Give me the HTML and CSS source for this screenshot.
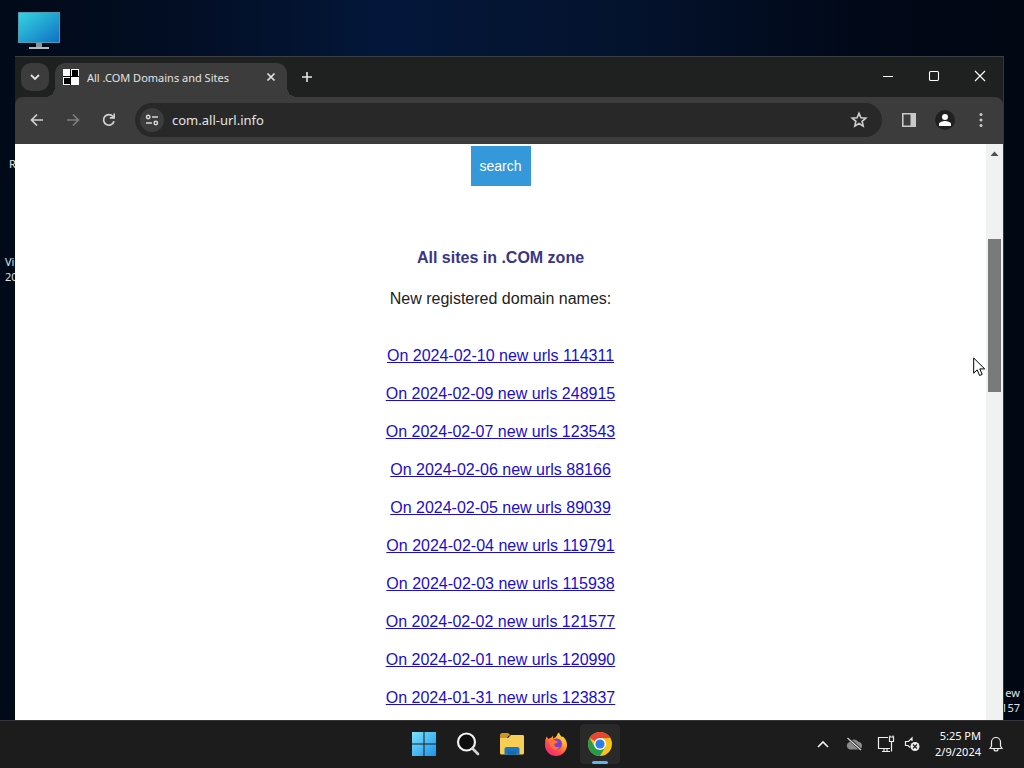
FILE: index.html
```html
<!DOCTYPE html>
<html lang="en">
<head>
    <meta charset="UTF-8">
    <meta name="viewport" content="width=device-width, initial-scale=1.0">
    <title>All .COM Domains and Sites</title>
    <link rel="stylesheet" href="styles.css">
</head>
<body>
    <main class="desktop">
        <!-- Desktop icons -->
        <svg class="desktop-icon" width="42" height="38" viewBox="0 0 42 38" aria-hidden="true">
            <defs>
                <linearGradient id="screen" x1="0" y1="0" x2="1" y2="1">
                    <stop offset="0" stop-color="#35d6e0"/>
                    <stop offset="1" stop-color="#0f6fc4"/>
                </linearGradient>
            </defs>
            <rect x="0.5" y="0.5" width="41" height="30" fill="url(#screen)" stroke="#4a9db5"/>
            <path d="M18 31h6v4h-6z" fill="#8b9499"/>
            <path d="M11 35h20v2H11z" fill="#b5bcc0"/>
        </svg>
        <span class="desktop-label label-r">R</span>
        <span class="desktop-label label-vi">Vi<br>20</span>
        <span class="desktop-label label-ew">ew<br>157</span>

        <!-- Browser window -->
        <section class="window">
            <header class="tab-strip">
                <button class="tab-search" aria-label="Search tabs">
                    <svg width="10" height="10" viewBox="0 0 10 10"><path d="M1 3l4 4 4-4" fill="none" stroke="#e3e3e3" stroke-width="1.8"/></svg>
                </button>
                <div class="tab">
                    <svg width="16" height="16" viewBox="0 0 16 16" aria-hidden="true">
                        <path d="M0 0h16v16H0z" fill="#fff"/>
                        <path d="M9 1h6v6H9zM1 9h6v6H1zM7 0h1v16H7zM0 7h16v1H0z" fill="#000"/>
                    </svg>
                    <span class="tab-title">All .COM Domains and Sites</span>
                    <button class="tab-close" aria-label="Close tab">
                        <svg width="10" height="10" viewBox="0 0 10 10"><path d="M1.5 1.5l7 7M8.5 1.5l-7 7" stroke="#e3e3e3" stroke-width="1.7"/></svg>
                    </button>
                </div>
                <button class="new-tab" aria-label="New tab">
                    <svg width="12" height="12" viewBox="0 0 12 12"><path d="M6 1v10M1 6h10" stroke="#e3e3e3" stroke-width="1.6"/></svg>
                </button>
                <div class="window-controls">
                    <button aria-label="Minimize"><svg width="12" height="12" viewBox="0 0 12 12"><path d="M1 6.5h10" stroke="#fff"/></svg></button>
                    <button aria-label="Maximize"><svg width="12" height="12" viewBox="0 0 12 12"><rect x="1.5" y="1.5" width="9" height="9" rx="1.2" fill="none" stroke="#fff" stroke-width="1.1"/></svg></button>
                    <button aria-label="Close"><svg width="12" height="12" viewBox="0 0 12 12"><path d="M1 1l10 10M11 1L1 11" stroke="#fff" stroke-width="1.1"/></svg></button>
                </div>
            </header>

            <nav class="toolbar">
                <button class="tool" aria-label="Back"><svg width="16" height="16" viewBox="0 0 16 16"><path d="M14 8H3M8 2.5L2.5 8 8 13.5" fill="none" stroke="#d0d0d0" stroke-width="1.7"/></svg></button>
                <button class="tool" aria-label="Forward"><svg width="16" height="16" viewBox="0 0 16 16"><path d="M2 8h11M8 2.5L13.5 8 8 13.5" fill="none" stroke="#7c7c7c" stroke-width="1.7"/></svg></button>
                <button class="tool" aria-label="Reload"><svg width="16" height="16" viewBox="0 0 16 16"><path d="M13 9.3A5.3 5.3 0 1 1 12 4.5L13.2 6" fill="none" stroke="#d0d0d0" stroke-width="1.8"/><path d="M14 1.5v5.2H8.8V5.1h3.6V1.5z" fill="#d0d0d0"/></svg></button>
                <div class="omnibox">
                    <button class="site-info" aria-label="View site information">
                        <svg width="14" height="14" viewBox="0 0 14 14" fill="none" stroke="#d8d8d8" stroke-width="1.5"><circle cx="3.2" cy="4" r="1.7"/><path d="M7 4h6M1 10h6"/><circle cx="10.8" cy="10" r="1.7"/></svg>
                    </button>
                    <input class="address" type="text" aria-label="Address" value="com.all-url.info">
                    <button class="bookmark" aria-label="Bookmark this tab">
                        <svg width="18" height="18" viewBox="0 0 18 18"><path d="M9 2.2l1.9 4.5 4.9.4-3.7 3.2 1.1 4.8L9 12.5l-4.2 2.6 1.1-4.8-3.7-3.2 4.9-.4z" fill="none" stroke="#cfcfcf" stroke-width="1.6"/></svg>
                    </button>
                </div>
                <div class="tools">
                    <button class="tool" aria-label="Side panel"><svg width="16" height="16" viewBox="0 0 16 16"><path d="M1.8 1.8h12.4v12.4H1.8z" fill="none" stroke="#c9c9c9" stroke-width="1.6"/><path d="M9.5 1h5.5v14H9.5z" fill="#c9c9c9"/></svg></button>
                    <button class="tool" aria-label="Profile"><svg width="20" height="20" viewBox="0 0 20 20"><circle cx="10" cy="10" r="10" fill="#202020"/><circle cx="10" cy="7" r="3" fill="#fff"/><path d="M4 16v-2c0-2 4-3 6-3s6 1 6 3v2z" fill="#fff"/></svg></button>
                    <button class="tool" aria-label="Menu"><svg width="16" height="16" viewBox="0 0 16 16" fill="#c9c9c9"><circle cx="8" cy="2.5" r="1.5"/><circle cx="8" cy="8" r="1.5"/><circle cx="8" cy="13.5" r="1.5"/></svg></button>
                </div>
            </nav>

            <div class="viewport">
                <article class="page">
                    <button class="search-button">search</button>
                    <h1>All sites in .COM zone</h1>
                    <p>New registered domain names:</p>
                    <ul class="dates">
                        <li><a href="#">On 2024-02-10 new urls 114311</a></li>
                        <li><a href="#">On 2024-02-09 new urls 248915</a></li>
                        <li><a href="#">On 2024-02-07 new urls 123543</a></li>
                        <li><a href="#">On 2024-02-06 new urls 88166</a></li>
                        <li><a href="#">On 2024-02-05 new urls 89039</a></li>
                        <li><a href="#">On 2024-02-04 new urls 119791</a></li>
                        <li><a href="#">On 2024-02-03 new urls 115938</a></li>
                        <li><a href="#">On 2024-02-02 new urls 121577</a></li>
                        <li><a href="#">On 2024-02-01 new urls 120990</a></li>
                        <li><a href="#">On 2024-01-31 new urls 123837</a></li>
                    </ul>
                </article>
                <div class="scrollbar">
                    <svg width="9" height="5" viewBox="0 0 9 5" aria-hidden="true"><path d="M0.5 5l4-4.5 4 4.5z" fill="#505050"/></svg>
                    <div class="thumb"></div>
                </div>
            </div>
        </section>

        <svg class="cursor" width="13" height="20" viewBox="0 0 13 20" aria-hidden="true"><path d="M.7 1v15.2l3.5-3.3 2.4 5.6 2.6-1.1-2.4-5.5h4.9z" fill="#fff" stroke="#000"/></svg>
    </main>

    <!-- Taskbar -->
    <footer class="taskbar">
        <div class="apps">
            <button class="app" aria-label="Start">
                <svg width="24" height="24" viewBox="0 0 24 24">
                    <defs><linearGradient id="win" x1="0" y1="0" x2="1" y2="1"><stop offset="0" stop-color="#7be3fb"/><stop offset="1" stop-color="#1b93ea"/></linearGradient></defs>
                    <path d="M0 0h11.5v11.5H0zM12.5 0H24v11.5H12.5zM0 12.5h11.5V24H0zM12.5 12.5H24V24H12.5z" fill="url(#win)"/>
                </svg>
            </button>
            <button class="app" aria-label="Search">
                <svg width="24" height="24" viewBox="0 0 24 24"><circle cx="10.5" cy="10" r="8.5" fill="#0d0d0d" stroke="#f2f2f2" stroke-width="2.2"/><path d="M16.5 16.5l5.5 5.5" stroke="#d5d5d5" stroke-width="2.6" stroke-linecap="round"/></svg>
            </button>
            <button class="app" aria-label="File Explorer">
                <svg width="26" height="24" viewBox="0 0 26 24">
                    <path d="M1 3.500Q1 1 3 1h6l3 2.500H1z" fill="#d29a1c"/>
                    <path d="M1 6h8l3-3h12q1 0 1 1.500V21q0 1.500-1.500 1.500h-21Q1 22.500 1 21z" fill="#f7cd55"/>
                    <path d="M1 3h9L8 6H1z" fill="#c9952a"/>
                    <path d="M5.500 22.500V17q0-2 2-2h11q2 0 2 2v5.500z" fill="#1976c5"/>
                    <path d="M9 22.500V20q0-1 1-1h6q1 0 1 1v2.500z" fill="#1469b2"/>
                </svg>
            </button>
            <button class="app" aria-label="Firefox">
                <svg width="24" height="24" viewBox="0 0 24 24">
                    <defs><linearGradient id="fox" x1="0.9" y1="0" x2="0.2" y2="1"><stop offset="0" stop-color="#fff04a"/><stop offset="0.4" stop-color="#ff9a2b"/><stop offset="0.7" stop-color="#ff4450"/><stop offset="1" stop-color="#e72a82"/></linearGradient></defs>
                    <path d="M2.500 4.500l2 2.500Q6 5.500 7.500 5.500L9 3.500v3q3-1 4-3 0-2 2-3 .5 2.500 3 4.500l1-.5q4 4 4 8.500A11 11 0 0 1 1 13Q.500 8 2.500 4.500z" fill="url(#fox)"/>
                    <circle cx="12.500" cy="12" r="5.500" fill="#7941c8"/>
                    <path d="M5 8q4-2 7 1l2 .5q-.5 2-3 2-1.500 1 0 3 2 1.500 4.500 0-1.500 4-5.500 3-5-2-5-9.500z" fill="#ff7139"/>
                    <path d="M12 5q4-1 7 4 1 5-1 8 5-8-1-12l-2-3z" fill="#ffc43d"/>
                </svg>
            </button>
            <button class="app active" aria-label="Google Chrome">
                <svg width="24" height="24" viewBox="0 0 24 24">
                    <circle cx="12" cy="12" r="12" fill="#fbc116"/>
                    <path d="M12 12L1.610 6A12 12 0 0 1 22.390 6H12z" fill="#ea4335"/>
                    <path d="M1.610 6L6.800 15 12 18l5.200-3L12 24A12 12 0 0 1 1.610 6z" fill="#269b4b"/>
                    <circle cx="12" cy="12" r="6" fill="#fff"/>
                    <circle cx="12" cy="12" r="4.600" fill="#2b7de9"/>
                </svg>
            </button>
        </div>
        <div class="tray">
            <svg width="12" height="8" viewBox="0 0 12 8" aria-hidden="true"><path d="M1 7l5-5 5 5" fill="none" stroke="#f0f0f0" stroke-width="1.6"/></svg>
            <svg class="cloud" width="18" height="16" viewBox="0 0 18 16" aria-hidden="true"><path d="M4.500 13.500a4 4 0 0 1-.2-7.500A5.500 5.500 0 0 1 13.500 6a3.800 3.800 0 0 1 .5 7.500z" fill="#8a8a8a"/><path d="M3 2l13 12" stroke="#1c1c1c" stroke-width="2.400"/><path d="M2.500 2l13.500 12" stroke="#ddd" stroke-width="1.200"/></svg>
            <svg width="18" height="18" viewBox="0 0 18 18" fill="none" stroke="#eee" stroke-width="1.2" aria-hidden="true"><path d="M11 2.500H1.500v11H13M5 16.500h8M7 13.500v3M10 13.500v3M12.500 2h4v4.500h-4zM14.500 6.500v10M13 2V.5M16 2V.5"/></svg>
            <svg width="16" height="16" viewBox="0 0 16 16" aria-hidden="true"><path d="M8 5V2L4.500 5.500h-3v4h2.500l2 2" fill="none" stroke="#eee" stroke-width="1.2"/><circle cx="11" cy="10.500" r="4.500" fill="#eee"/><path d="M9 8.500l4 4M13 8.500l-4 4" stroke="#1c1c1c" stroke-width="1.2"/></svg>
            <time class="clock" datetime="2024-02-09T17:25">5:25 PM<br>2/9/2024</time>
            <svg width="14" height="16" viewBox="0 0 14 16" fill="none" stroke="#eee" stroke-width="1.2" aria-hidden="true"><path d="M1 12.500h12l-1.500-2.500V6a4.500 4.500 0 0 0-9 0v4zM5 13q0 2 2 2t2-2"/></svg>
        </div>
    </footer>
</body>
</html>
```

FILE: styles.css
```css
/* Reset and Base Styling */
* {
    margin: 0;
    padding: 0;
    box-sizing: border-box;
}

body {
    display: flex;
    flex-direction: column;
    height: 100vh;
    overflow: hidden;
    font-family: 'Noto Sans', 'Open Sans', sans-serif;
    font-size: 11px;
    color: #fff;
}

button {
    display: flex;
    align-items: center;
    justify-content: center;
    flex-shrink: 0;
    background: none;
    border: none;
}

svg {
    display: block;
    flex-shrink: 0;
}

/* Desktop */
.desktop {
    position: relative;
    flex: 1;
    min-height: 0;
    background: linear-gradient(90deg, #010a18, #020e24 18%, #04173a 38%, #04132e 60%, #010817 85%, #010713);
}

.desktop-icon {
    position: absolute;
    left: 18px;
    top: 12px;
}

.desktop-label {
    position: absolute;
    line-height: 15px;
    color: #dfe3e8;
}

.label-r {
    left: 9px;
    top: 156px;
}

.label-vi {
    left: 5px;
    top: 254px;
}

.label-ew {
    right: 4px;
    bottom: 5px;
    text-align: right;
}

/* Browser window */
.window {
    position: absolute;
    top: 56px;
    left: 15px;
    right: 20px;
    bottom: 0;
    display: flex;
    flex-direction: column;
    background: #1f2120;
    border-top: 1px solid #3b3f42;
    border-right: 1px solid #33363a;
}

.tab-strip {
    display: flex;
    height: 40px;
    padding: 6px 0 0 6px;
}

.tab-search {
    width: 28px;
    height: 28px;
    border-radius: 10px;
    background: #3c3c3c;
}

.tab {
    position: relative;
    display: flex;
    align-items: center;
    gap: 8px;
    width: 232px;
    margin-left: 6px;
    padding: 0 10px 6px 8px;
    border-radius: 10px 10px 0 0;
    background: #3c3c3c;
}

/* curved feet of the active tab */
.tab::before,
.tab::after {
    content: "";
    position: absolute;
    bottom: 0;
    width: 10px;
    height: 10px;
}

.tab::before {
    right: 100%;
    background: radial-gradient(circle at 0 0, transparent 10px, #3c3c3c 10px);
}

.tab::after {
    left: 100%;
    background: radial-gradient(circle at 100% 0, transparent 10px, #3c3c3c 10px);
}

.tab-title {
    flex: 1;
    white-space: nowrap;
    color: #e3e3e3;
}

.tab-close {
    width: 12px;
    height: 16px;
}

.new-tab {
    width: 28px;
    height: 28px;
    margin-left: 6px;
}

.window-controls {
    display: flex;
    margin-left: auto;
}

.window-controls button {
    width: 46px;
    height: 26px;
}

.toolbar {
    display: flex;
    align-items: center;
    height: 47px;
    padding: 0 4px 2px;
    background: #3c3c3c;
    border-radius: 8px 8px 0 0;
}

.tool {
    width: 36px;
    height: 34px;
}

.omnibox {
    display: flex;
    align-items: center;
    flex: 1;
    height: 34px;
    margin-left: 8px;
    padding: 0 14px 0 5px;
    border-radius: 17px;
    background: #282828;
}

.site-info {
    width: 24px;
    height: 24px;
    border-radius: 12px;
    background: #3c3c3c;
}

.address {
    flex: 1;
    margin-left: 8px;
    border: none;
    outline: none;
    background: none;
    font-family: inherit;
    font-size: 13px;
    color: #e3e3e3;
}

.tools {
    display: flex;
    margin-left: 9px;
}

/* Web page */
.viewport {
    display: flex;
    flex: 1;
    min-height: 0;
    background: #fff;
}

.page {
    display: flex;
    flex-direction: column;
    align-items: center;
    flex: 1;
    overflow: hidden;
    padding-top: 2px;
    font-family: 'Liberation Sans', Arial, sans-serif;
    font-size: 16px;
    line-height: 18px;
    color: #222;
}

.search-button {
    width: 60px;
    height: 40px;
    background: #3498db;
    color: #fff;
    font-family: inherit;
    font-size: 14px;
}

.page h1 {
    margin-top: 63px;
    font-size: 16px;
    color: #3a3585;
}

.page p {
    margin-top: 23px;
}

.dates {
    margin-top: 29px;
    list-style: none;
    text-align: center;
    line-height: 38px;
}

.dates a {
    color: #1a0dcb;
}

.scrollbar {
    width: 17px;
    padding: 7px 2px 0;
    background: #f0f1f1;
}

.scrollbar svg {
    margin: 0 auto;
}

.thumb {
    height: 153px;
    margin-top: 83px;
    background: #797b7a;
}

.cursor {
    position: absolute;
    right: 38px;
    top: 357px;
}

/* Taskbar */
.taskbar {
    display: grid;
    grid-template-columns: 1fr auto 1fr;
    align-items: center;
    height: 48px;
    padding-bottom: 1px;
    background: #1c1c1c;
    border-top: 1px solid #37373a;
}

.apps {
    grid-column: 2;
    display: flex;
    gap: 4px;
}

.app {
    position: relative;
    width: 40px;
    height: 40px;
    border-radius: 4px;
}

.app.active {
    background: #292929;
}

.app.active::after {
    content: "";
    position: absolute;
    bottom: 0;
    left: 12px;
    width: 16px;
    height: 3px;
    border-radius: 2px;
    background: #60b5e8;
}

.tray {
    display: flex;
    align-items: center;
    justify-content: flex-end;
    padding-right: 21px;
}

.tray svg + svg {
    margin-left: 9px;
}

.tray .cloud {
    margin: 0 5px 0 16px;
}

.clock {
    margin: 0 8px 0 15px;
    line-height: 16px;
    text-align: right;
}
```
